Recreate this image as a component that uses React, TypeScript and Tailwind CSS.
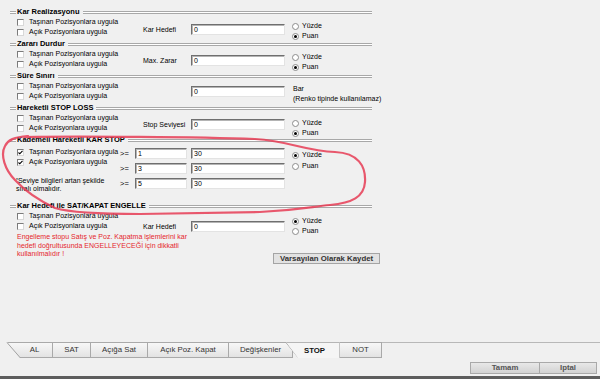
import React from 'react'

type Opt = { pt: string }

function Groove({ className = '' }: { className?: string }) {
  return <div className={`h-[3px] border-y border-[#a8a8a8] bg-white ${className}`} />
}

function Heading({ title }: { title: string }) {
  return (
    <div className="flex items-center h-[10px] w-[362px]">
      <Groove className="w-[6px]" />
      <span className="px-[1px] font-bold text-[7.5px] leading-[10px] whitespace-nowrap">{title}</span>
      <Groove className="flex-1 ml-[2px]" />
    </div>
  )
}

function Check({ checked = false }: { checked?: boolean }) {
  return (
    <div className="w-[7px] h-[7px] bg-white border border-t-[#7b7b7b] border-l-[#7b7b7b] border-b-[#d8d8d8] border-r-[#d8d8d8] flex items-center justify-center">
      {checked && (
        <svg width="5" height="5" viewBox="0 0 5 5">
          <polyline points="0.5,2.5 1.8,3.8 4.5,0.8" fill="none" stroke="#000" strokeWidth="1.1" />
        </svg>
      )}
    </div>
  )
}

function CheckRow({ label, checked = false }: { label: string; checked?: boolean }) {
  return (
    <div className="flex items-center h-[10px] pl-[7px] gap-[5px] whitespace-nowrap">
      <Check checked={checked} />
      <span>{label}</span>
    </div>
  )
}

function Radio({ label, checked = false }: { label: string; checked?: boolean }) {
  return (
    <div className="flex items-center h-[10px] gap-[3px]">
      <div className="w-[7px] h-[7px] rounded-full bg-white border border-[#8c8c8c] flex items-center justify-center">
        {checked && <div className="w-[3px] h-[3px] rounded-full bg-black" />}
      </div>
      <span>{label}</span>
    </div>
  )
}

function Field({ value, className = 'w-[94px]' }: { value: string; className?: string }) {
  return (
    <div className={`h-[11px] bg-white border border-t-[#6f6f6f] border-l-[#6f6f6f] border-b-[#e3e3e3] border-r-[#e3e3e3] shadow-[inset_1px_1px_0_#b4b4b4] pl-[2px] leading-[9px] ${className}`}>
      {value}
    </div>
  )
}

function Radios({ pt, yuzde }: Opt & { yuzde: boolean }) {
  return (
    <div className={`flex flex-col ml-[7px] ${pt}`}>
      <Radio label="Yüzde" checked={yuzde} />
      <Radio label="Puan" checked={!yuzde} />
    </div>
  )
}

function Section({
  title,
  label,
  inputPt,
  radioPt,
  yuzde = false,
  extra,
  bodyPt = '',
}: {
  title: string
  label: string
  inputPt: string
  radioPt: string
  yuzde?: boolean
  extra?: React.ReactNode
  bodyPt?: string
}) {
  return (
    <div className="mb-[2px]">
      <Heading title={title} />
      <div className={`flex h-[20px] ${bodyPt}`}>
        <div className="w-[133px] flex flex-col">
          <CheckRow label="Taşınan Pozisyonlara uygula" />
          <CheckRow label="Açık Pozisyonlara uygula" />
        </div>
        <div className={`w-[48px] flex ${inputPt}`}>
          <span className="leading-[11px] whitespace-nowrap">{label}</span>
        </div>
        <div className={inputPt}>
          <Field value="0" />
        </div>
        {extra ?? <Radios pt={radioPt} yuzde={yuzde} />}
      </div>
    </div>
  )
}

function Tab({ label, className = '', active = false }: { label: string; className?: string; active?: boolean }) {
  return (
    <div
      className={`h-[16px] flex items-center justify-center text-[7.8px] border-t border-r ${
        active
          ? 'bg-[#f5f5f5] border-[#b5b5b5] font-bold text-[#111]'
          : 'bg-gradient-to-b from-[#f7f7f7] to-[#e3e3e3] border-[#a9a9a9] border-b text-[#333]'
      } ${className}`}
    >
      {label}
    </div>
  )
}

export default function App() {
  return (
    <div className="relative w-[600px] h-[379px] bg-[#f0f0f0] overflow-hidden flex flex-col font-['Liberation_Sans',Arial,sans-serif] text-[7px] text-black">
      {/* options panel */}
      <div className="h-[342px] pl-[10px] pt-[7px]">
        <Section title="Kar Realizasyonu" label="Kar Hedefi" inputPt="pt-[7px]" radioPt="pt-[4.5px]" />
        <Section title="Zararı Durdur" label="Max. Zarar" inputPt="pt-[6px]" radioPt="pt-[3.5px]" />
        <Section
          title="Süre Sınırı"
          label=""
          inputPt="pt-[5px]"
          radioPt=""
          extra={
            <div className="flex flex-col ml-[8px] pt-[3px] whitespace-nowrap">
              <span className="h-[10px] leading-[10px]">Bar</span>
              <span className="h-[10px] leading-[10px]">(Renko tipinde kullanılamaz)</span>
            </div>
          }
        />
        <Section title="Hareketli STOP LOSS" label="Stop Seviyesi" inputPt="pt-[6px]" radioPt="pt-[5.5px]" />

        {/* Kademeli Hareketli KAR STOP */}
        <div className="mb-[2px]">
          <Heading title="Kademeli Hareketli KAR STOP" />
          <div className="flex h-[54px]">
            <div className="w-[110px] flex flex-col pt-[2px]">
              <CheckRow label="Taşınan Pozisyonlara uygula" checked />
              <CheckRow label="Açık Pozisyonlara uygula" checked />
              <div className="mt-[10px] pl-[6px] leading-[7.5px]">
                <span className="text-[5px] align-top">*</span>Seviye bilgileri artan şekilde
                <br />
                sıralı olmalıdır.
              </div>
            </div>
            <div className="flex flex-col gap-[4px] pt-[3px]">
              {['1', '3', '5'].map((v) => (
                <div key={v} className="flex items-center">
                  <span className="w-[15px] text-[7.5px] leading-[11px]">&gt;=</span>
                  <Field value={v} className="w-[52px]" />
                  <Field value="30" className="w-[94px] ml-[4px]" />
                </div>
              ))}
            </div>
            <div className="flex flex-col ml-[7px] pt-[4.5px]">
              <div className="h-[11px] flex items-center"><Radio label="Yüzde" checked /></div>
              <div className="h-[11px] flex items-center"><Radio label="Puan" /></div>
            </div>
          </div>
        </div>

        {/* Kar Hedefi ile SAT/KAPAT ENGELLE */}
        <div>
          <Heading title="Kar Hedefi ile SAT/KAPAT ENGELLE" />
          <div className="flex h-[20px]">
            <div className="w-[133px] flex flex-col">
              <CheckRow label="Taşınan Pozisyonlara uygula" />
              <CheckRow label="Açık Pozisyonlara uygula" />
            </div>
            <div className="w-[48px] pt-[10px]">
              <span className="leading-[11px] whitespace-nowrap">Kar Hedefi</span>
            </div>
            <div className="pt-[10px]">
              <Field value="0" />
            </div>
            <Radios pt="pt-[5.5px]" yuzde />
          </div>
          <div className="flex items-start w-[370px]">
            <div className="mt-[2px] pl-[7px] text-[#e5262d] leading-[8.5px] whitespace-nowrap">
              Engelleme stopu Satış ve Poz. Kapatma işlemlerini kar
              <br />
              hedefi doğrultusunda ENGELLEYECEĞİ için dikkatli
              <br />
              kullanılmalıdır !
            </div>
            <button className="ml-auto mt-[22px] w-[107px] h-[11px] bg-[#e2e2e2] border border-[#a4a4a4] font-bold text-[7.8px] leading-[9px] text-[#333]">
              Varsayılan Olarak Kaydet
            </button>
          </div>
        </div>
      </div>

      {/* tabs */}
      <div className="h-[16px] flex items-stretch pl-[7px]">
        <Tab label="AL" className="w-[46px] pl-[10px] border-l-0 [clip-path:polygon(0_0,100%_0,100%_100%,13px_100%)]" />
        <Tab label="SAT" className="w-[38px]" />
        <Tab label="Açığa Sat" className="w-[57px]" />
        <Tab label="Açık Poz. Kapat" className="w-[81px]" />
        <Tab label="Değişkenler" className="w-[64px]" />
        <Tab label="STOP" active className="w-[54px] -ml-[7px] pl-[4px] z-10 border-r-[#c4c4c4] [clip-path:polygon(0_0,100%_0,100%_100%,12px_100%)]" />
        <Tab label="NOT" className="w-[42px]" />
        <div className="flex-1 border-t border-[#b8b8b8]" />
      </div>

      {/* bottom buttons */}
      <div className="h-[18px] flex justify-end items-start pt-[4px] pr-[3px]">
        <button className="w-[70px] h-[12px] bg-gradient-to-b from-[#e8e8e8] to-[#d2d2d2] border border-[#a9a9a9] text-[7.8px] font-bold text-[#555] leading-[10px]">
          Tamam
        </button>
        <button className="w-[57px] h-[12px] bg-gradient-to-b from-[#e8e8e8] to-[#d2d2d2] border border-l-0 border-[#a9a9a9] text-[7.8px] font-bold text-[#555] leading-[10px]">
          Iptal
        </button>
      </div>
      <div className="h-[3px] bg-[#5d5d5d]" />

      {/* slanted tab edges */}
      <svg className="absolute left-0 top-[342px] pointer-events-none" width="300" height="16">
        <line x1="7" y1="0.5" x2="20" y2="15.5" stroke="#a2a2a2" strokeWidth="1" />
        <line x1="286" y1="0.5" x2="298" y2="15.5" stroke="#a2a2a2" strokeWidth="1" />
      </svg>

      {/* hand-drawn annotation */}
      <svg className="absolute inset-0 pointer-events-none" width="600" height="379">
        <path
          d="M 24 137 C 80 136 200 137 255 139 C 290 141 305 151 335 152 C 358 153 366 166 365 182 C 364 197 352 203 330 205 C 310 207 300 210 260 212 L 140 214 C 100 214 72 213 55 208 C 38 200 25 191 15 180 C 5 170 0 155 5 146 C 8 140 14 137 28 136"
          fill="none"
          stroke="#e63c55"
          strokeOpacity="0.85"
          strokeWidth="2.2"
          strokeLinecap="round"
        />
      </svg>
    </div>
  )
}
